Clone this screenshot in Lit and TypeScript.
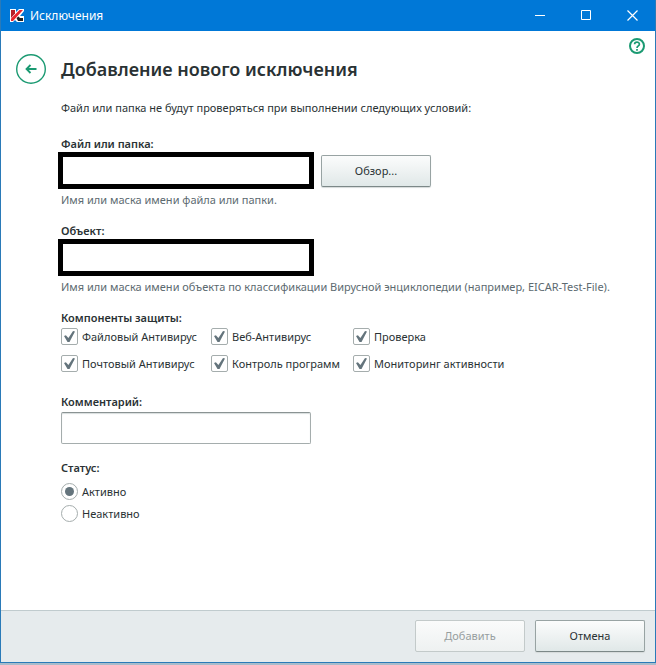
import { LitElement, html, css } from "lit";
import { customElement, state } from "lit/decorators.js";

interface Component {
  id: string;
  label: string;
}

const COMPONENTS: Component[] = [
  { id: "file", label: "Файловый Антивирус" },
  { id: "web", label: "Веб-Антивирус" },
  { id: "scan", label: "Проверка" },
  { id: "mail", label: "Почтовый Антивирус" },
  { id: "control", label: "Контроль программ" },
  { id: "monitor", label: "Мониторинг активности" },
];

@customElement("title-bar")
class TitleBar extends LitElement {
  static styles = css`
    :host {
      display: flex;
      align-items: center;
      height: 31px;
      flex: none;
      background: #0078d7;
      color: #fff;
    }
    .logo {
      width: 16px;
      height: 16px;
      margin: 0 5px 0 8px;
      flex: none;
    }
    .title {
      flex: 1;
      font-size: 12px;
      line-height: 16px;
    }
    .control {
      width: 46px;
      height: 31px;
      padding: 0;
      border: 0;
      background: none;
      color: inherit;
      display: grid;
      place-items: center;
    }
    .control svg {
      width: 11px;
      height: 11px;
      fill: none;
      stroke: currentColor;
    }
  `;

  render() {
    return html`
      <svg class="logo" viewBox="0 0 16 16" aria-hidden="true">
        <path d="M1 1h6v3l3-3h5v2L11 8h4v6H8l-2-2-2 2H1z" fill="#fff" />
        <path d="M2 2h4v3.500L2 10z" fill="#b5202a" />
        <path d="M10.500 2H14L4 13H2v-2.500z" fill="#e8242e" />
        <path d="M7.500 10l2-1.500 1.500 1.500h3v3H9z" fill="#222" />
      </svg>
      <span class="title">Исключения</span>
      <button class="control" aria-label="Свернуть">
        <svg viewBox="0 0 11 11"><path d="M0 5.500h10" /></svg>
      </button>
      <button class="control" aria-label="Развернуть">
        <svg viewBox="0 0 11 11"><path d="M.5.5h9v9h-9z" /></svg>
      </button>
      <button class="control" aria-label="Закрыть">
        <svg viewBox="0 0 11 11"><path d="M.5.5l10 10M10.500.5l-10 10" stroke-width="1.200" /></svg>
      </button>
    `;
  }
}

@customElement("app-root")
class AppRoot extends LitElement {
  @state() private status = "active";

  static styles = css`
    * {
      box-sizing: border-box;
    }
    :host {
      display: flex;
      flex-direction: column;
      min-height: 100vh;
      box-sizing: border-box;
      padding-bottom: 2px;
      background: #a9bccb;
      font-family: "Noto Sans", "Open Sans", sans-serif;
      font-size: 11px;
      line-height: 14px;
      color: #2a3234;
    }
    .window {
      flex: 1;
      display: flex;
      flex-direction: column;
      border: 1px solid #2a7ab8;
      border-top: 0;
      background: #fff;
    }
    .page {
      flex: 1;
      padding: 7px 10px 24px 15px;
      display: grid;
      grid-template-columns: 30px 1fr 16px;
      column-gap: 15px;
      align-content: start;
    }
    .back {
      width: 30px;
      height: 30px;
      margin-top: 16px;
      padding: 0;
      border: 0;
      background: none;
    }
    .help {
      width: 16px;
      height: 16px;
      padding: 0;
      border: 0;
      background: none;
    }
    .back svg,
    .help svg {
      display: block;
      width: 100%;
      height: 100%;
    }
    h1 {
      margin: 16px 0 0;
      font-size: 18px;
      line-height: 30px;
      font-weight: 600;
    }
    form {
      grid-column: 2 / -1;
      display: flex;
      flex-direction: column;
      padding-top: 17px;
    }
    p {
      margin: 0;
    }
    .caption {
      display: block;
      padding: 0;
      font-weight: 600;
    }
    .hint {
      color: #5c6a70;
      margin-top: 4px;
    }
    .field {
      margin-top: 17px;
    }
    .intro + .field {
      margin-top: 22px;
    }
    fieldset {
      border: 0;
      padding: 0;
      margin: 17px 0 0;
      min-width: 0;
    }
    .line {
      display: flex;
      align-items: center;
      gap: 7px;
      margin-top: 1px;
    }
    .masked {
      width: 256px;
      height: 37px;
      margin-left: -3px;
      border: 5px solid #000;
      background: #fff;
      font: inherit;
    }
    .comment {
      display: block;
      width: 250px;
      height: 32px;
      margin-top: 3px;
      padding: 0 6px;
      border: 1px solid #a5adad;
      border-top-color: #8a9393;
      border-radius: 2px;
      box-shadow: inset 0 1px 1px #d8dddd;
      background: #fff;
      font: inherit;
    }
    .button {
      width: 110px;
      height: 32px;
      padding: 0;
      border: 1px solid #98a3a3;
      border-bottom-color: #7c8888;
      border-radius: 2px;
      background: linear-gradient(#fbfcfc, #eef2f2 50%, #e0e8e8);
      box-shadow: 0 1px 1px #d5dada;
      font: inherit;
      color: #2a3234;
    }
    .button:disabled {
      border-color: #c3caca;
      background: linear-gradient(#fafbfb, #eef1f1);
      color: #979e9f;
      box-shadow: none;
    }
    .components {
      display: grid;
      grid-template-columns: 150px 142px max-content;
      row-gap: 10px;
      margin-top: 3px;
    }
    .option {
      display: flex;
      align-items: center;
      gap: 4px;
      height: 17px;
      white-space: nowrap;
    }
    .option input {
      appearance: none;
      display: grid;
      place-items: center;
      width: 17px;
      height: 17px;
      margin: 0;
      flex: none;
      border: 1px solid #a5adad;
      border-radius: 2px;
      background: #fff;
    }
    .option input[type="radio"] {
      border-radius: 50%;
    }
    .option input[type="radio"]:checked::before {
      content: "";
      width: 9px;
      height: 9px;
      border-radius: 50%;
      background: #64747c;
    }
    .option input[type="checkbox"]:checked::before {
      content: "";
      width: 11px;
      height: 11px;
      background: #64747c;
      clip-path: polygon(0 45%, 17% 38%, 40% 64%, 82% 0, 100% 5%, 50% 100%, 32% 100%);
    }
    .comment-field {
      margin-top: 23px;
    }
    .statuses {
      display: grid;
      row-gap: 5px;
      margin-top: 8px;
    }
    footer {
      flex: none;
      display: flex;
      justify-content: flex-end;
      gap: 10px;
      padding: 9px 10px 10px;
      border-top: 1px solid #c0cbce;
      background: #e6ebed;
    }
  `;

  render() {
    return html`
      <div class="window">
        <title-bar></title-bar>
        <main class="page">
          <button class="back" aria-label="Назад">
            <svg viewBox="0 0 30 30" fill="none" stroke="#1b9a72">
              <circle cx="15" cy="15" r="14.300" stroke-width="1.400" />
              <path d="M20.500 15H11M14.500 11L10.500 15l4 4" stroke-width="1.800" />
            </svg>
          </button>
          <h1>Добавление нового исключения</h1>
          <button class="help" aria-label="Справка">
            <svg viewBox="0 0 16 16" fill="none" stroke="#1b9a72">
              <circle cx="8" cy="8" r="7" stroke-width="2" />
              <path d="M5.600 6.300C5.600 3.400 10.400 3.400 10.400 6.200 10.400 7.800 8 7.900 8 10" stroke-width="1.700" />
              <path d="M8 11v1.700" stroke-width="1.700" />
            </svg>
          </button>
          <form @submit=${(e: Event) => e.preventDefault()}>
            <p class="intro">Файл или папка не будут проверяться при выполнении следующих условий:</p>
            <div class="field">
              <label class="caption" for="path">Файл или папка:</label>
              <div class="line">
                <input class="masked" id="path" type="text" />
                <button class="button" type="button">Обзор...</button>
              </div>
              <p class="hint">Имя или маска имени файла или папки.</p>
            </div>
            <div class="field">
              <label class="caption" for="object">Объект:</label>
              <div class="line">
                <input class="masked" id="object" type="text" />
              </div>
              <p class="hint">
                Имя или маска имени объекта по классификации Вирусной энциклопедии (например, EICAR-Test-File).
              </p>
            </div>
            <fieldset>
              <legend class="caption">Компоненты защиты:</legend>
              <div class="components">
                ${COMPONENTS.map(
                  (c) => html`<label class="option">
                    <input type="checkbox" name=${c.id} checked /><span>${c.label}</span>
                  </label>`
                )}
              </div>
            </fieldset>
            <div class="comment-field">
              <label class="caption" for="comment">Комментарий:</label>
              <input class="comment" id="comment" type="text" />
            </div>
            <fieldset>
              <legend class="caption">Статус:</legend>
              <div class="statuses">
                <label class="option">
                  <input
                    type="radio"
                    name="status"
                    .checked=${this.status === "active"}
                    @change=${() => (this.status = "active")}
                  /><span>Активно</span>
                </label>
                <label class="option">
                  <input
                    type="radio"
                    name="status"
                    .checked=${this.status === "inactive"}
                    @change=${() => (this.status = "inactive")}
                  /><span>Неактивно</span>
                </label>
              </div>
            </fieldset>
          </form>
        </main>
        <footer>
          <button class="button" type="button" disabled>Добавить</button>
          <button class="button" type="button">Отмена</button>
        </footer>
      </div>
    `;
  }
}
